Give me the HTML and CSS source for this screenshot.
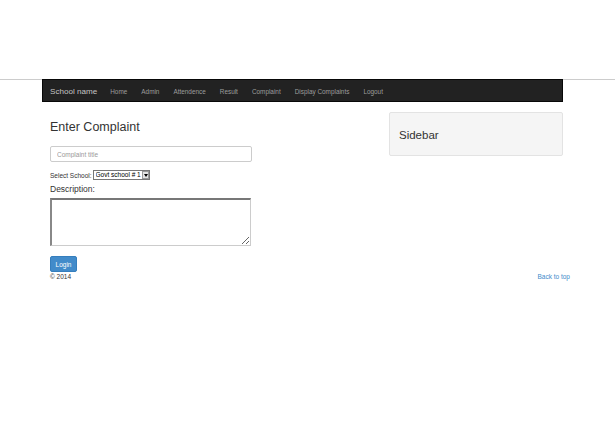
FILE: index.html
```html
<!DOCTYPE html>
<html lang="en">
<head>
<meta charset="UTF-8">
<title>Enter Complaint</title>
<link rel="stylesheet" href="styles.css">
</head>
<body>
<div class="topline"></div>
<div class="container">
    <nav class="navbar">
        <a class="brand" href="#">School name</a>
        <ul class="nav">
            <li><a href="#">Home</a></li>
            <li><a href="#">Admin</a></li>
            <li><a href="#">Attendence</a></li>
            <li><a href="#">Result</a></li>
            <li><a href="#">Complaint</a></li>
            <li><a href="#">Display Complaints</a></li>
            <li><a href="#">Logout</a></li>
        </ul>
    </nav>
    <div class="row">
        <div class="main">
            <h2>Enter Complaint</h2>
            <form>
                <input class="form-control" type="text" placeholder="Complaint title">
                <div class="school">
                    <label>Select School:</label>
                    <span class="select-wrap">
                        <select>
                            <option>Govt school # 1</option>
                        </select>
                    </span>
                </div>
                <label class="desc">Description:</label>
                <textarea></textarea>
                <button class="btn" type="button">Login</button>
            </form>
        </div>
        <div class="side">
            <div class="well">
                <h3>Sidebar</h3>
            </div>
        </div>
    </div>
    <footer class="footer">
        <span>&copy; 2014</span>
        <a href="#">Back to top</a>
    </footer>
</div>
</body>
</html>
```
FILE: styles.css
```css
body {
    margin: 0;
    padding: 0;
    font-family: "Liberation Sans", Arial, sans-serif;
    color: #333;
    background: #fff;
}
.topline {
    height: 80px;
    border-bottom: 1px solid #ccc;
    box-sizing: border-box;
}
.container {
    width: 521px;
    margin-left: 42px;
    margin-top: -1px;
}
.navbar {
    background: #222;
    border: 1px solid #080808;
    height: 23px;
    box-sizing: border-box;
    display: flex;
    align-items: center;
    padding: 1px 0 0 7px;
}
.brand {
    color: #c4c4c4;
    font-size: 8.1px;
    text-decoration: none;
    margin-right: 6px;
}
.nav {
    list-style: none;
    margin: 0;
    padding: 0;
    display: flex;
}
.nav a {
    display: block;
    color: #9d9d9d;
    font-size: 6.4px;
    text-decoration: none;
    padding: 0 7px;
}
.row {
    display: flex;
    justify-content: space-between;
    padding: 0 0 0 8px;
}
.main {
    width: 210px;
}
.main h2 {
    font-size: 12.5px;
    font-weight: normal;
    margin: 18px 0 12px;
    line-height: 14px;
}
.form-control {
    display: block;
    width: 202px;
    height: 16px;
    box-sizing: border-box;
    border: 1px solid #ccc;
    border-radius: 2px;
    padding: 0 6px;
    font-family: inherit;
    font-size: 6.5px;
    margin: 0;
}
.form-control::placeholder {
    color: #999;
}
.school {
    margin-top: 8px;
    display: flex;
    align-items: center;
    font-size: 6.5px;
}
.school label {
    margin-right: 1px;
}
.select-wrap {
    position: relative;
    display: inline-block;
}
.select-wrap select {
    appearance: none;
    -webkit-appearance: none;
    display: block;
    font-family: inherit;
    font-size: 6.5px;
    color: #000;
    height: 10px;
    width: 57px;
    padding: 0 0 0 2px;
    border: 1px solid #777;
    border-radius: 0;
    background: #fff;
    line-height: 8px;
}
.select-wrap::after {
    content: "";
    position: absolute;
    right: 1px;
    top: 1px;
    width: 7px;
    height: 8px;
    box-sizing: border-box;
    background: #e4e4e4;
    border: 1px solid #999;
}
.select-wrap::before {
    content: "";
    position: absolute;
    right: 2px;
    top: 4px;
    border-left: 2.5px solid transparent;
    border-right: 2.5px solid transparent;
    border-top: 3px solid #000;
    z-index: 1;
}
.desc {
    display: block;
    font-size: 8.5px;
    margin-top: 4px;
    line-height: 11px;
}
textarea {
    display: block;
    width: 201px;
    height: 48px;
    box-sizing: border-box;
    border: 1px solid #ccc;
    border-top: 2px solid #777;
    border-left: 2px solid #888;
    margin: 3px 0 0;
    resize: vertical;
}
.btn {
    display: block;
    margin-top: 10px;
    background: #428bca;
    border: 1px solid #357ebd;
    border-radius: 2px;
    color: #fff;
    font-family: inherit;
    font-size: 6.5px;
    width: 27px;
    height: 16px;
    padding: 0;
}
.side {
    width: 174px;
}
.well {
    margin-top: 10px;
    background: #f5f5f5;
    border: 1px solid #e3e3e3;
    border-radius: 2px;
    height: 44px;
    box-sizing: border-box;
    display: flex;
    align-items: center;
    padding-left: 9px;
}
.well h3 {
    margin: 0;
    font-size: 11.5px;
    font-weight: normal;
    padding-top: 2px;
}
.footer {
    display: flex;
    justify-content: space-between;
    padding-left: 8px;
    margin-right: -7px;
    font-size: 6.5px;
    line-height: 8px;
    margin-top: 1px;
}
.footer a {
    color: #428bca;
    text-decoration: none;
}
```
